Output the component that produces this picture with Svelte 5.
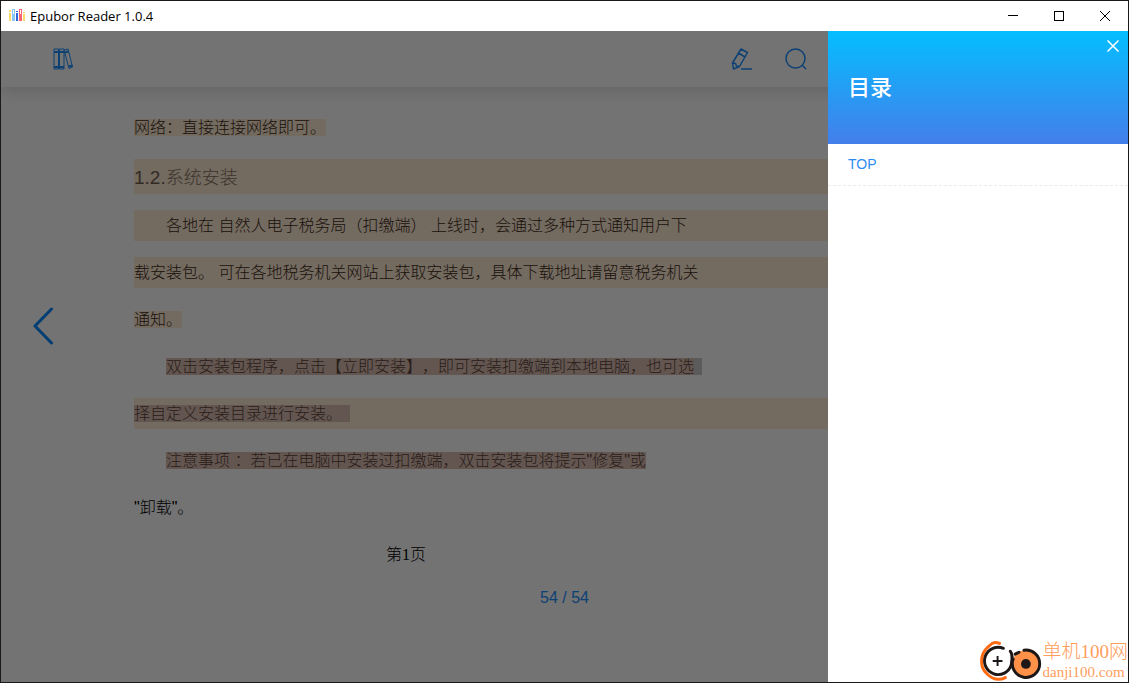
<script lang="ts">
  type Tone = 'plain' | 'mark' | 'block' | 'selected' | 'both'

  interface Line {
    text: string
    tone: Tone
    indent?: boolean
    tail?: boolean
  }

  const lines: Line[] = [
    { text: '各地在 自然人电子税务局（扣缴端） 上线时，会通过多种方式通知用户下', tone: 'block', indent: true },
    { text: '载安装包。 可在各地税务机关网站上获取安装包，具体下载地址请留意税务机关', tone: 'block' },
    { text: '通知。', tone: 'mark' },
    { text: '双击安装包程序，点击【立即安装】，即可安装扣缴端到本地电脑，也可选', tone: 'selected', indent: true, tail: true },
    { text: '择自定义安装目录进行安装。', tone: 'both', tail: true },
    { text: '注意事项 ：若已在电脑中安装过扣缴端，双击安装包将提示"修复"或', tone: 'selected', indent: true },
    { text: '"卸载"。', tone: 'plain' },
  ]

  const chapters = [{ title: 'TOP', href: '#top' }]

  let drawerOpen = $state(true)
</script>

<div class="window">
  <header class="titlebar">
    <svg class="app-icon" width="16" height="14" viewBox="0 0 16 14" aria-hidden="true">
      <path fill="#fbd968" d="M0 4h2v8H0zM0 1h2v2H0zM14 5h2v7h-2zM14 3h2v1h-2z" />
      <path fill="#8cc8f5" d="M3 0h3v12H3z" />
      <path fill="#2f66d8" d="M7 4h2v8H7zM7 2h2v1H7z" />
      <path fill="#fa6472" d="M10 0h3v12h-3z" />
      <path fill="#fff" d="M4 1h1v4H4zM11 1h1v4h-1z" />
    </svg>
    <h1>Epubor Reader 1.0.4</h1>
    <div class="window-controls">
      <button aria-label="Minimize">
        <svg width="10" height="10" shape-rendering="crispEdges"><path d="M0 4.5h10" /></svg>
      </button>
      <button aria-label="Maximize">
        <svg width="10" height="10" shape-rendering="crispEdges"><path d="M.5 .5h9v9h-9z" /></svg>
      </button>
      <button aria-label="Close">
        <svg width="10" height="10"><path d="M0 0l10 10M10 0L0 10" /></svg>
      </button>
    </div>
  </header>

  <div class="body">
    <main class="reader">
      <div class="toolbar">
        <button class="tool library" aria-label="Library">
          <svg width="22" height="22" viewBox="0 0 22 22">
            <path d="M2 1h4.500v20H2zM7.500 1H12v20H7.500zM12 2l4-1 4.500 18-3.500 1.500z" />
            <path class="band" d="M2 4h10M2 19h10M12.500 4.500l4-1M16.500 18.500l4-1" />
          </svg>
        </button>
        <button class="tool" aria-label="Notes">
          <svg width="22" height="22" viewBox="0 0 22 22">
            <path d="M10 1l6.500 3.500L8.500 18.500 2.500 21 1.500 15zM7.500 5l6.500 4M1.500 15l3 .5 1 2.500 3 .5M10 21h11" />
          </svg>
        </button>
        <button class="tool" aria-label="Search">
          <svg width="22" height="22" viewBox="0 0 22 22">
            <circle cx="10.500" cy="10.500" r="9.500" /><path d="M17.500 17.500l3.500 3.500" />
          </svg>
        </button>
      </div>

      <div class="page">
        <button class="prev" aria-label="Previous page">
          <svg width="20" height="38" viewBox="0 0 20 38"><path d="M18.500 2L2 19l16.500 17" /></svg>
        </button>
        <article>
          <p class="line mark"><span>网络：直接连接网络即可。</span></p>
          <h2>1.2.<span>系统安装</span></h2>
          {#each lines as line}
            <p class="line {line.tone}" class:indent={line.indent}>
              <span class:tail={line.tail}>{line.text}</span>
            </p>
          {/each}
          <p class="folio">第1页</p>
        </article>
      </div>
      <footer class="progress">54 / 54</footer>
    </main>

    {#if drawerOpen}
      <div class="mask"></div>
      <aside class="drawer">
        <div class="drawer-head">
          <button class="drawer-close" aria-label="关闭" onclick={() => (drawerOpen = false)}>
            <svg width="12" height="12" viewBox="0 0 12 12"><path d="M.5 .5l11 11M11.500 .5l-11 11" /></svg>
          </button>
          <h2>目录</h2>
        </div>
        <nav>
          {#each chapters as chapter}
            <a href={chapter.href}>{chapter.title}</a>
          {/each}
        </nav>
        <div class="brand">
          <svg width="64" height="42" viewBox="0 0 64 42" fill="none" stroke-linecap="round">
            <path stroke="#ff6a13" stroke-width="3" d="M20 3C13 0 10 5 6 9C0 16 0 28 7 34C12 39 18 42 26 38" />
            <path stroke="#1d1718" stroke-width="3" d="M24 8A14 14 0 1 0 32 25C33 19 34 15 31 11" />
            <path stroke="#1d1718" stroke-width="2" stroke-linecap="butt" d="M18 16v10M13 21h10" />
            <circle cx="47" cy="24" r="14" fill="#ff9149" />
            <path stroke="#1d1718" stroke-width="3" d="M45 10A14 14 0 1 1 34 19M36 14l4-2" />
            <circle cx="47" cy="24" r="5" fill="#1d1718" />
          </svg>
          <div class="brand-text">
            <span class="brand-name">单机100网</span>
            <span class="brand-url">danji100.com</span>
          </div>
        </div>
      </aside>
    {/if}
  </div>
</div>

<style>
  :global(body) { margin: 0; }
  button { padding: 0; border: 0; background: none; cursor: pointer; }
  svg { display: block; }
  h1, h2, p { margin: 0; font-weight: 400; }

  .window { display: flex; flex-direction: column; box-sizing: border-box; min-height: 100vh; border: 1px solid #1b191b; background: #fff; font-family: "Liberation Sans", "Noto Sans CJK SC", sans-serif; }

  .titlebar { display: flex; align-items: center; height: 30px; padding-left: 8px; background: #fff; }
  .titlebar h1 { flex: 1; margin-left: 5px; color: #000; font: 13px "Open Sans", "Noto Sans", sans-serif; }
  .window-controls { display: flex; height: 100%; }
  .window-controls button { display: flex; align-items: center; justify-content: center; width: 46px; }
  .window-controls path { fill: none; stroke: #000; }

  .body { position: relative; display: flex; flex: 1; }
  .reader { flex: 1; min-width: 0; overflow: hidden; background: #fff; }
  .toolbar { display: flex; align-items: center; gap: 32px; height: 56px; padding: 0 321px 0 51px; box-shadow: 0 2px 16px rgba(0, 0, 0, 0.16); }
  .tool path, .tool circle { fill: none; stroke: #2090ff; stroke-width: 1.5; stroke-linejoin: round; }
  .tool.library { margin-right: auto; }
  .library path { stroke-width: 1; }
  .library .band { stroke-width: 2; }

  .page { display: flex; align-items: center; padding-top: 25px; }
  .prev { width: 133px; padding: 0 0 30px 32px; }
  .prev path { fill: none; stroke: #0088ff; stroke-width: 3; stroke-linecap: round; stroke-linejoin: round; }
  article { flex: 1; min-width: 0; color: #000; font-family: "Liberation Serif", "Noto Sans CJK SC", serif; font-size: 16px; font-weight: 300; text-spacing-trim: space-all; }
  article h2 { height: 35px; margin: 8px 0 16px; background: #ffebd5; color: #71604f; font-family: "Liberation Sans", sans-serif; font-size: 19px; line-height: 35px; }
  article h2 span { color: #857261; font-family: "Noto Sans CJK SC", sans-serif; font-weight: 300; font-size: 18px; }
  p { font-weight: inherit; }
  .line { height: 31px; margin-bottom: 16px; font-family: "Liberation Sans", "Noto Sans CJK SC", sans-serif; line-height: 31px; white-space: nowrap; }
  .line span { display: inline-block; line-height: 17px; }
  .mark, .block { color: #402c18; }
  .mark span, .block, .both { background: #ffebd5; }
  .line.mark { background: none; }
  .selected, .both { color: #5b433b; }
  .selected span, .both span { background: #dbbfb2; }
  .indent { padding-left: 32px; }
  .tail { border-right: 8px solid #dbbfb2; }
  .selected .tail { border-color: #cacaca; }
  .folio { width: 544px; line-height: 31px; text-align: center; }
  .progress { padding: 19px 0; color: #2090ff; font-size: 16px; line-height: 18px; text-align: center; }

  .mask { position: absolute; inset: 0; background: rgba(0, 0, 0, 0.55); }
  .drawer { position: absolute; top: 0; right: 0; bottom: 0; display: flex; flex-direction: column; width: 300px; background: #fff; }
  .drawer-head { height: 113px; background: linear-gradient(#04beff, #447eeb); color: #fff; }
  .drawer-close { display: block; margin: 9px 9px 0 auto; }
  .drawer-close path { fill: none; stroke: #fff; stroke-width: 1.5; }
  .drawer-head h2 { padding: 20px; font-size: 22px; font-weight: 500; line-height: 32px; }
  nav a { display: block; padding: 10px 20px; border-bottom: 1px dashed #e8eaec; color: #2d8cf0; font-size: 14px; line-height: 21px; text-decoration: none; }
  .brand { display: flex; margin-top: auto; margin-left: 152px; }
  .brand-text { display: flex; flex-direction: column; color: #ff9d5c; font-family: "Liberation Serif", "Noto Sans CJK SC", serif; font-weight: 300; white-space: nowrap; }
  .brand-name { font-size: 19px; line-height: 24px; }
  .brand-url { font-size: 15px; line-height: 16px; }
</style>
